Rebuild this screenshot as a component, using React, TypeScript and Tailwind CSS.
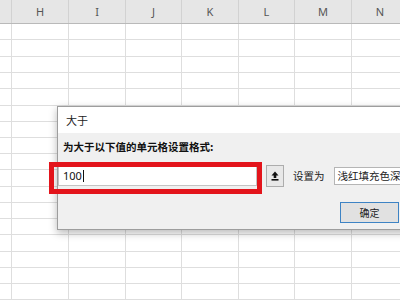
import React from 'react';

const cols = [
  { label: '', w: 'w-[12px]' },
  { label: 'H', w: 'w-[57px]' },
  { label: 'I', w: 'w-[57px]' },
  { label: 'J', w: 'w-[56px]' },
  { label: 'K', w: 'w-[57px]' },
  { label: 'L', w: 'w-[56px]' },
  { label: 'M', w: 'w-[57px]' },
  { label: 'N', w: 'w-[57px]' },
];

// row heights incl. bottom border, picked so the grid lines fall where they do in Excel
const rowHeights = [
  'h-[16px]', 'h-[17px]', 'h-[16px]', 'h-[16px]', 'h-[17px]', 'h-[16px]', 'h-[16px]', 'h-[16px]',
  'h-[16px]', 'h-[17px]', 'h-[16px]', 'h-[16px]', 'h-[16px]', 'h-[17px]', 'h-[16px]', 'h-[16px]', 'h-[16px]',
];

function UploadIcon() {
  return (
    <svg width="8" height="10" viewBox="0 0 8 10">
      <path d="M4 0.5 L7.5 4.5 L5.3 4.5 L5.3 7 L2.7 7 L2.7 4.5 L0.5 4.5 Z" fill="#111" />
      <rect x="0.5" y="8" width="7" height="1.6" fill="#111" />
    </svg>
  );
}

export default function App() {
  return (
    <div className="relative w-[400px] h-[300px] overflow-hidden bg-white font-['Noto_Sans','Noto_Sans_CJK_SC',sans-serif]">
      {/* column header */}
      <div className="flex h-[24px] bg-[#e6e6e6] border-b border-[#b9b9b9]">
        {cols.map((c, i) => (
          <div
            key={i}
            className={`${c.w} shrink-0 h-full border-r border-[#d2d2d2] flex items-center justify-center text-[11px] text-[#555] pt-[2px]`}
          >
            {c.label}
          </div>
        ))}
      </div>

      {/* cells */}
      {rowHeights.map((h, r) => (
        <div key={r} className={`flex ${h} border-b border-[#dedede]`}>
          {cols.map((c, i) => (
            <div key={i} className={`${c.w} shrink-0 h-full border-r border-[#dedede]`} />
          ))}
        </div>
      ))}

      {/* 大于 dialog */}
      <div className="absolute left-[57px] top-[106px] w-[360px] h-[124px] border border-[#9d9d9d] bg-[#f0f0f0] shadow-[0_3px_8px_rgba(0,0,0,0.28)] flex flex-col font-['Noto_Sans_CJK_SC',sans-serif]">
        <div className="h-[26px] bg-white flex items-center pl-[8px] text-[11px] text-[#222]">大于</div>
        <div className="flex flex-col">
          <div className="mt-[7px] pl-[5px] text-[10.5px] leading-[14px] font-bold text-[#111]">
            为大于以下值的单元格设置格式:
          </div>
          <div className="mt-[11px] flex items-center h-[22px]">
            <div className="shrink-0 w-[199px] h-[20px] bg-white border border-[#c4c4c4] flex items-center pl-[4px] text-[11px] text-[#111] font-['Noto_Sans',sans-serif]">
              100<span className="inline-block w-px h-[12px] bg-[#111] ml-px" />
            </div>
            <div className="shrink-0 ml-[9px] w-[18px] h-[22px] border border-[#adadad] bg-[#e8e8e8] flex items-center justify-center">
              <UploadIcon />
            </div>
            <span className="shrink-0 whitespace-nowrap ml-[9px] text-[10.5px] text-[#222]">设置为</span>
            <div className="shrink-0 ml-[9px] w-[90px] h-[18px] bg-white border border-[#b5b5b5] flex items-center pl-[3px] text-[10.5px] text-[#222] whitespace-nowrap overflow-hidden">
              浅红填充色深
            </div>
          </div>
          <div className="mt-[15px] ml-[282px] w-[59px] h-[21px] border border-[#3d83c4] bg-[#e1e1e1] flex items-center justify-center text-[10px] text-[#222]">
            确定
          </div>
        </div>
      </div>

      {/* red highlight annotation */}
      <div className="absolute left-[49px] top-[162px] w-[213px] h-[32px] border-[5px] border-[#e3141b]" />
    </div>
  );
}
